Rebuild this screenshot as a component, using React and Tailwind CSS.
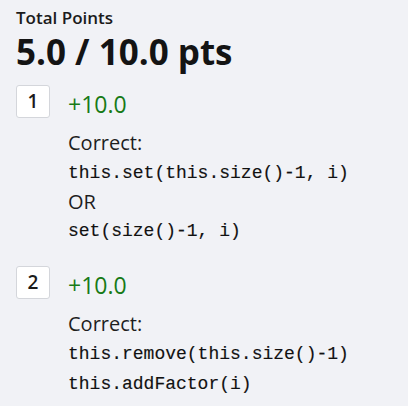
const questions = [
  { num: 1, points: "+10.0", lines: [
    { text: "this.set(this.size()-1, i)", code: true },
    { text: "OR", code: false },
    { text: "set(size()-1, i)", code: true },
  ] },
  { num: 2, points: "+10.0", lines: [
    { text: "this.remove(this.size()-1)", code: true },
    { text: "this.addFactor(i)", code: true },
  ] },
];

const Question = ({ q, className }) => (
  <div className={className}>
    <div className="flex items-start">
      <div className="w-[34px] h-[33px] flex items-center justify-center bg-white border border-[#d4d6db] rounded-[3px] text-[19px] font-semibold text-[#1b1b1b]">
        {q.num}
      </div>
      <div className="ml-[18px] mt-[5px] text-[23px] leading-[28px] font-medium text-[#177a17]">{q.points}</div>
    </div>
    <div className="pl-[52px] mt-[10px] text-[#1e1e1e]">
      <div className="text-[20px] leading-[30px]">Correct:</div>
      {q.lines.map((line, i) =>
        line.code ? (
          <div
            key={i}
            className="text-[18px] leading-[30px] whitespace-pre text-[#111] [-webkit-text-stroke:0.15px_#111]"
            style={{ fontFamily: '"Liberation Mono", monospace' }}
          >
            {line.text}
          </div>
        ) : (
          <div key={i} className="text-[20px] leading-[28px]">{line.text}</div>
        )
      )}
    </div>
  </div>
);

export default function App() {
  return (
    <div className="min-h-screen bg-[#f1f2f6] px-[16px] pt-[7px]" style={{ fontFamily: '"Open Sans", sans-serif' }}>
      <div className="text-[17px] leading-[21px] font-semibold text-[#1b1b1b]">Total Points</div>
      <div className="mt-[3px] text-[35px] leading-[42px] font-bold text-[#141414]">5.0 / 10.0 pts</div>
      <Question q={questions[0]} className="mt-[12px]" />
      <Question q={questions[1]} className="mt-[20px]" />
    </div>
  );
}
